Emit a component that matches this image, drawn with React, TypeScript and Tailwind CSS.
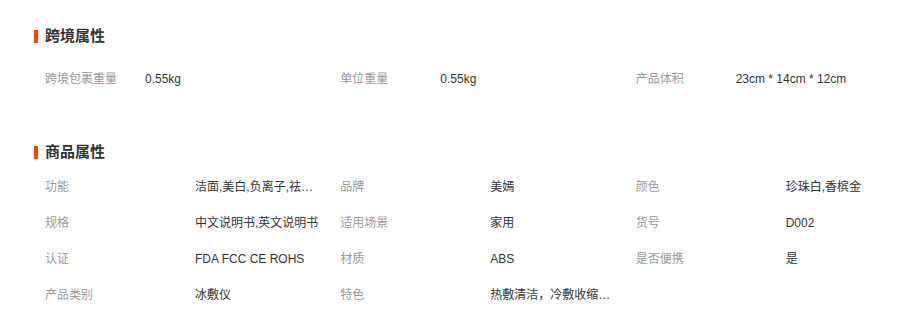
const font = { fontFamily: '"Liberation Sans", "Noto Sans CJK SC", sans-serif' };

type Attr = { label: string; value: string };

const crossBorder: Attr[] = [
  { label: '跨境包裹重量', value: '0.55kg' },
  { label: '单位重量', value: '0.55kg' },
  { label: '产品体积', value: '23cm * 14cm * 12cm' },
];

const product: Attr[] = [
  { label: '功能', value: '洁面,美白,负离子,祛…' },
  { label: '品牌', value: '美嫣' },
  { label: '颜色', value: '珍珠白,香槟金' },
  { label: '规格', value: '中文说明书,英文说明书' },
  { label: '适用场景', value: '家用' },
  { label: '货号', value: 'D002' },
  { label: '认证', value: 'FDA FCC CE ROHS' },
  { label: '材质', value: 'ABS' },
  { label: '是否便携', value: '是' },
  { label: '产品类别', value: '冰敷仪' },
  { label: '特色', value: '热敷清洁，冷敷收缩…' },
];

function Heading({ title }: { title: string }) {
  return (
    <div className="flex items-center h-5">
      <span className="w-[4px] h-[13px] bg-[#ff4400] ml-[34px] mr-[7px]" />
      <h2 className="text-[15px] font-bold text-[#333] leading-5">{title}</h2>
    </div>
  );
}

export default function App() {
  return (
    <div className="w-[904px] h-[324px] bg-white overflow-hidden" style={font}>
      <div className="pt-[26px]">
        <Heading title="跨境属性" />
        <div className="grid grid-cols-3 pl-[45px] w-[931px] mt-[23px]">
          {crossBorder.map((a) => (
            <div key={a.label} className="flex items-center h-5 text-xs">
              <span className="w-[100px] text-[#999]">{a.label}</span>
              <span className="text-[#333]">{a.value}</span>
            </div>
          ))}
        </div>
      </div>

      <div className="mt-[53px]">
        <Heading title="商品属性" />
        <div className="grid grid-cols-3 pl-[45px] w-[931px] mt-[7px]">
          {product.map((a) => (
            <div key={a.label} className="flex items-center h-9 text-xs">
              <span className="w-[150px] text-[#999]">{a.label}</span>
              <span className="text-[#333] whitespace-nowrap">{a.value}</span>
            </div>
          ))}
        </div>
      </div>
    </div>
  );
}
